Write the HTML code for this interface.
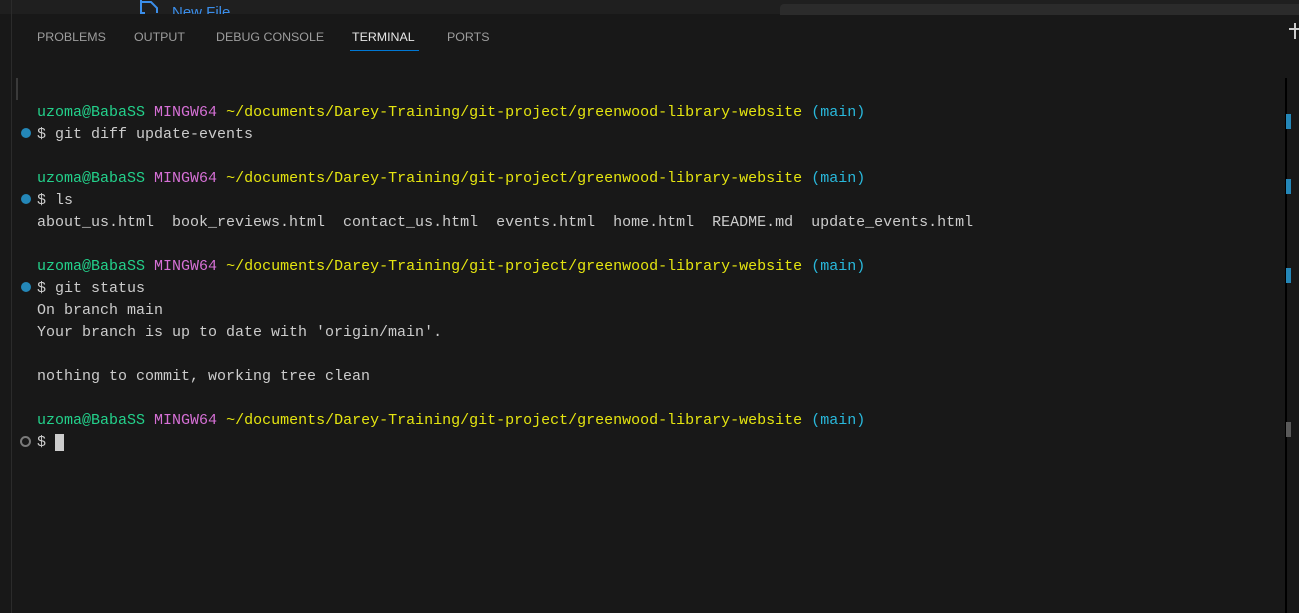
<!DOCTYPE html>
<html><head><style>
body{margin:0;width:1299px;height:613px;background:#181818;overflow:hidden;position:relative;font-family:"Liberation Sans",sans-serif}
.top{position:absolute;left:0;top:0;width:1299px;height:14px;background:#1f1f1f}
.search{position:absolute;left:780px;top:4px;width:519px;height:11px;background:#2b2b2b;border-radius:4px 0 0 0}
.lb{position:absolute;left:11px;top:0;width:1px;height:613px;background:#2b2b2b}
.tabs{position:absolute;top:30px;font-size:12.4px;color:#9d9d9d}
.tabs span{position:absolute;white-space:nowrap}
.term{position:absolute;left:37px;top:102px;font-family:"Liberation Mono",monospace;font-size:15px;line-height:22px;color:#cccccc;white-space:pre}
.g{color:#23d18b}.m{color:#d670d6}.y{color:#e5e510}.c{color:#29b8db}
.dot{position:absolute;left:21px;width:10px;height:10px;border-radius:50%;background:#2487b8}
.hd{position:absolute;left:20px;width:7px;height:7px;border-radius:50%;border:2px solid #7a7a7a}
.sb{position:absolute;left:1285px;top:78px;width:2px;height:535px;background:#000}
.mk{position:absolute;left:1286px;width:5px;height:15px;background:#2487b8}
</style></head><body>
<div class="top"></div><div class="search"></div>
<svg style="position:absolute;left:139px;top:0" width="22" height="14"><path d="M2 0V13H6M2 2H12L18 8V13" stroke="#3b8eea" stroke-width="2" fill="none"/></svg>
<div style="position:absolute;left:172px;top:2px;height:12px;overflow:hidden;color:#3b8eea;font-size:15px;line-height:22px">New File</div>
<div class="lb"></div>
<div class="tabs">
<span style="left:37px">PROBLEMS</span>
<span style="left:134px">OUTPUT</span>
<span style="left:216px">DEBUG CONSOLE</span>
<span style="left:352px;color:#e7e7e7">TERMINAL</span>
<span style="left:447px">PORTS</span>
</div>
<div style="position:absolute;left:350px;top:50px;width:69px;height:1px;background:#0078d4"></div>
<div style="position:absolute;left:1289px;top:28px;width:10px;height:1.5px;background:#ccc"></div>
<div style="position:absolute;left:1294px;top:23px;width:1.5px;height:16px;background:#ccc"></div>
<div style="position:absolute;left:16px;top:78px;width:2px;height:22px;background:#3a3a3a"></div>
<div class="sb"></div>
<div class="mk" style="top:114px"></div>
<div class="mk" style="top:179px"></div>
<div class="mk" style="top:268px"></div>
<div class="mk" style="top:422px;background:#5a5a5a"></div>
<div class="dot" style="top:128px"></div>
<div class="dot" style="top:194px"></div>
<div class="dot" style="top:282px"></div>
<div class="hd" style="top:436px"></div>
<div class="term"><span class="g">uzoma@BabaSS</span> <span class="m">MINGW64</span> <span class="y">~/documents/Darey-Training/git-project/greenwood-library-website</span> <span class="c">(main)</span>
$ git diff update-events

<span class="g">uzoma@BabaSS</span> <span class="m">MINGW64</span> <span class="y">~/documents/Darey-Training/git-project/greenwood-library-website</span> <span class="c">(main)</span>
$ ls
about_us.html  book_reviews.html  contact_us.html  events.html  home.html  README.md  update_events.html

<span class="g">uzoma@BabaSS</span> <span class="m">MINGW64</span> <span class="y">~/documents/Darey-Training/git-project/greenwood-library-website</span> <span class="c">(main)</span>
$ git status
On branch main
Your branch is up to date with 'origin/main'.

nothing to commit, working tree clean

<span class="g">uzoma@BabaSS</span> <span class="m">MINGW64</span> <span class="y">~/documents/Darey-Training/git-project/greenwood-library-website</span> <span class="c">(main)</span>
$ <span style="background:#cccccc"> </span></div>
</body></html>
